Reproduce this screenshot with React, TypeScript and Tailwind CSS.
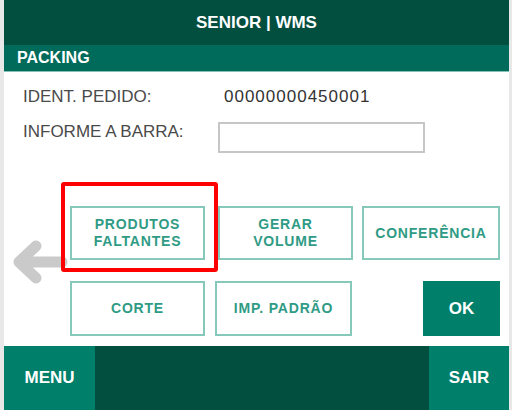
const btn =
  'flex items-center justify-center border-2 border-[#86c9bb] bg-white text-center text-[14px] font-bold leading-[17px] tracking-[0.8px] text-[#2f9b85]';

export default function App() {
  return (
    <div className="relative flex h-[410px] w-[512px] flex-col border-l-4 border-r-[3px] border-[#e8e8e8] bg-white font-['Liberation_Sans',Arial,sans-serif]">
      <header className="flex h-[45px] items-center justify-center bg-[#024e3f] text-[17px] font-bold text-white">
        SENIOR | WMS
      </header>
      <div className="flex h-[27px] items-center border-b border-[#86c2b6] bg-[#006b5b] px-[13px] text-[16px] font-bold text-white">
        PACKING
      </div>

      <main className="relative flex-1">
        <svg className="absolute left-0 top-0" width="80" height="274" viewBox="0 0 80 274">
          <path
            d="M58 190 H15 M32 174 L15 190 L32 206"
            fill="none"
            stroke="#cacaca"
            strokeWidth="11"
            strokeLinecap="round"
            strokeLinejoin="round"
          />
        </svg>

        <div className="mt-[15px] flex pl-[19px] text-[17px] leading-[20px]">
          <span className="w-[201px] text-[#4a4a4a]">IDENT. PEDIDO:</span>
          <span className="tracking-[1px] text-[#333]">00000000450001</span>
        </div>

        <div className="mt-[15px] flex items-start pl-[19px] text-[17px] leading-[20px]">
          <span className="w-[195px] text-[#4a4a4a]">INFORME A BARRA:</span>
          <input className="h-[31px] w-[207px] border-2 border-[#c6c6c6] bg-white px-2 outline-none" />
        </div>

        <div className="relative mt-[53px] flex pl-[66px]">
          <button className={`${btn} h-[54px] w-[135px]`}>
            PRODUTOS
            <br />
            FALTANTES
          </button>
          <button className={`${btn} ml-[13px] h-[54px] w-[135px]`}>
            GERAR
            <br />
            VOLUME
          </button>
          <button className={`${btn} ml-[9px] h-[54px] w-[138px]`}>CONFERÊNCIA</button>
        </div>

        <div className="relative mt-[21px] flex pl-[66px]">
          <button className={`${btn} h-[55px] w-[135px]`}>CORTE</button>
          <button className={`${btn} ml-[10px] h-[55px] w-[137px]`}>IMP. PADRÃO</button>
          <button className="ml-[71px] flex h-[55px] w-[77px] items-center justify-center bg-[#00806a] text-[17px] font-bold text-white">
            OK
          </button>
        </div>

        <div className="absolute left-[57px] top-[110px] h-[90px] w-[157px] rounded-[3px] border-4 border-[#ff0000]" />
      </main>

      <footer className="flex h-[64px] text-[17px] font-bold text-white">
        <div className="flex w-[91px] items-center justify-center bg-[#00806a]">MENU</div>
        <div className="flex-1 bg-[#024e3f]" />
        <div className="flex w-[80px] items-center justify-center bg-[#00806a]">SAIR</div>
      </footer>
    </div>
  );
}
